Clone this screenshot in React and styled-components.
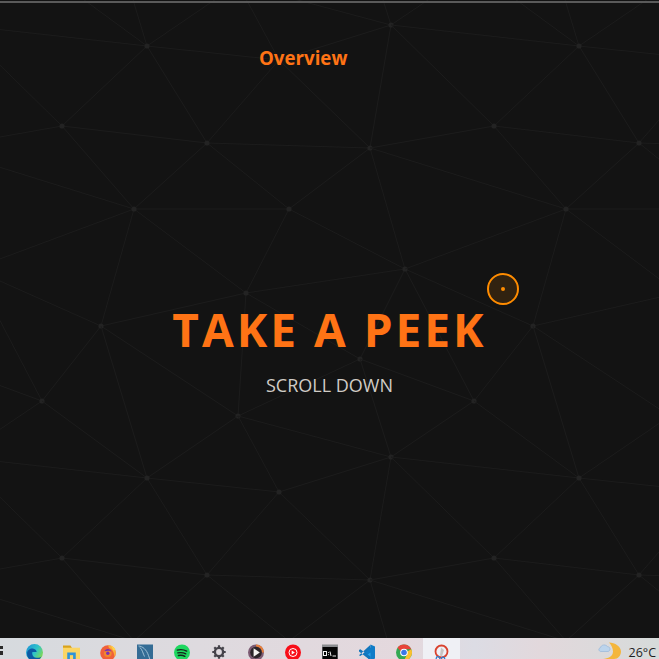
import React from "react";
import styled, { createGlobalStyle } from "styled-components";

const TILE = 432;

const NODES = {
  a: [147, 46],
  b: [62, 126],
  c: [207, 143],
  d: [134, 209],
  e: [289, 209],
  f: [391, 25],
  g: [370, 148],
  h: [405, 269],
  i: [246, 293],
  j: [101, 326],
  k: [42, 401],
  l: [238, 416],
  m: [360, 359],
  n: [279, 60],
};

// from, to, and which neighbouring tile the "to" node sits in
const EDGES = [
  ["a", "j", 0, -1], ["a", "k", 0, -1], ["a", "l", 0, -1], ["a", "f", -1, 0],
  ["a", "n", 0, 0], ["a", "b", 0, 0], ["a", "c", 0, 0],
  ["b", "f", -1, 0], ["b", "g", -1, 0], ["b", "c", 0, 0], ["b", "d", 0, 0],
  ["c", "n", 0, 0], ["c", "e", 0, 0], ["c", "d", 0, 0], ["c", "g", 0, 0],
  ["d", "g", -1, 0], ["d", "e", 0, 0], ["d", "j", 0, 0], ["d", "i", 0, 0], ["d", "h", -1, 0],
  ["e", "i", 0, 0], ["e", "g", 0, 0], ["e", "h", 0, 0],
  ["f", "n", 0, 0], ["f", "l", 0, -1], ["f", "m", 0, -1], ["f", "k", 1, -1], ["f", "g", 0, 0],
  ["g", "n", 0, 0], ["g", "h", 0, 0],
  ["h", "i", 0, 0], ["h", "m", 0, 0], ["h", "k", 1, 0], ["h", "j", 1, 0],
  ["i", "j", 0, 0], ["i", "l", 0, 0], ["i", "m", 0, 0],
  ["j", "k", 0, 0], ["j", "l", 0, 0],
  ["k", "m", -1, 0],
  ["l", "m", 0, 0],
  ["n", "l", 0, -1],
];

const OFFSETS = [-1, 0, 1, 2];

function Mesh() {
  const tiles = [];
  OFFSETS.forEach((tx) => OFFSETS.forEach((ty) => tiles.push([tx * TILE, ty * TILE])));
  return (
    <MeshLayer viewBox="0 0 659 659" width="659" height="659">
      {tiles.map(([ox, oy]) => (
        <g key={`${ox}-${oy}`}>
          {EDGES.map(([from, to, tx, ty]) => (
            <line
              key={from + to}
              x1={NODES[from][0] + ox}
              y1={NODES[from][1] + oy}
              x2={NODES[to][0] + tx * TILE + ox}
              y2={NODES[to][1] + ty * TILE + oy}
              stroke="#1c1c1c"
              strokeWidth="1"
            />
          ))}
          {Object.keys(NODES).map((key) => (
            <circle key={key} cx={NODES[key][0] + ox} cy={NODES[key][1] + oy} r="2.6" fill="#232323" />
          ))}
        </g>
      ))}
    </MeshLayer>
  );
}

const EdgeIcon = () => (
  <svg width="17" height="17" viewBox="0 0 16 16">
    <defs>
      <linearGradient id="edgeTop" x1="0" y1="0" x2="1" y2="0.6">
        <stop offset="0" stopColor="#1b8fd8" />
        <stop offset="0.6" stopColor="#2fc4c8" />
        <stop offset="1" stopColor="#7ed957" />
      </linearGradient>
    </defs>
    <circle cx="8" cy="8" r="8" fill="url(#edgeTop)" />
    <path d="M1 9c0-3 3-5 6-4.600 2 .3 3 1.600 3 3.200H6c-.8 2.600 1 5 4 5.400 2 .2 3.600-.3 4.600-1.400C13.200 14.600 10.600 16 8 16 4 16 .8 13 1 9z" fill="#0c59a4" />
  </svg>
);

const FolderIcon = () => (
  <svg width="17" height="17" viewBox="0 0 16 16">
    <path d="M0 1.500h7l1 1.500v2H0z" fill="#d9a21b" />
    <rect x="0" y="3.500" width="16" height="12.500" fill="#fbd564" />
    <rect x="4" y="8" width="8" height="8" fill="#2f93d8" />
    <rect x="6.500" y="10.500" width="3" height="5.500" fill="#fbd564" />
  </svg>
);

const FirefoxIcon = () => (
  <svg width="16" height="17" viewBox="0 0 16 16">
    <circle cx="8" cy="8.500" r="7.800" fill="#f0603a" />
    <path d="M8 .7c4.500 0 7.800 3.500 7.800 7.800 0 1.500-.5 3-1.300 4.200C14.500 8 12 4.500 9 3.500z" fill="#fbb03b" />
    <path d="M11 1.200c2 .5 3.500 2 4.500 4l-2 .8z" fill="#ffd34e" />
    <circle cx="7.800" cy="8.800" r="3.800" fill="#f08a2c" />
    <path d="M4.500 6.500a3.800 3.800 0 0 1 7 1c-1-1.200-2.400-1.500-3.700-1.200-1.400.3-2.400 1-3.300.2z" fill="#7a2fb8" />
    <circle cx="7.800" cy="8.800" r="1.700" fill="#7a2fb8" />
  </svg>
);

const MysqlIcon = () => (
  <svg width="16" height="17" viewBox="0 0 16 16">
    <rect width="16" height="16" fill="#346c95" />
    <path d="M1.500 1.500c4 .2 8 3.500 10 9.500l1.800 5M3 3c2.500 2.500 3 6 4.500 9" stroke="#a9c7da" strokeWidth="0.9" fill="none" />
  </svg>
);

const SpotifyIcon = () => (
  <svg width="16" height="17" viewBox="0 0 16 16">
    <circle cx="8" cy="8" r="8" fill="#1ed760" />
    <path d="M3.200 5.600c3-.8 6.500-.6 9.500 1M3.800 8.400c2.600-.6 5.600-.4 8 1M4.400 11c2.200-.5 4.500-.3 6.500.9" stroke="#15241b" strokeWidth="1.300" strokeLinecap="round" fill="none" />
  </svg>
);

const GearIcon = () => (
  <svg width="14" height="17" viewBox="0 0 14 16">
    <circle cx="7" cy="7.500" r="4.100" fill="none" stroke="#45434a" strokeWidth="2.400" />
    <g stroke="#45434a" strokeWidth="2.200">
      <path d="M7 .8v2.200M7 12v2.200M.3 7.500h2.200M11.500 7.500h2.200M2.300 2.800l1.500 1.500M10.200 10.700l1.500 1.500M2.300 12.200l1.500-1.500M10.200 4.300l1.500-1.500" />
    </g>
  </svg>
);

const PlayerIcon = () => (
  <svg width="16" height="17" viewBox="0 0 16 16">
    <circle cx="8" cy="8" r="8" fill="#7b5a72" />
    <path d="M8 0a8 8 0 0 1 8 8h-2a6 6 0 0 0-6-6z" fill="#e9803a" />
    <circle cx="8" cy="8" r="5.800" fill="#2b2428" />
    <path d="M5.600 3.800l6.200 4.200-6.200 4.200z" fill="#f4f2f0" />
  </svg>
);

const YtMusicIcon = () => (
  <svg width="16" height="17" viewBox="0 0 16 16">
    <circle cx="8" cy="8" r="8" fill="#f80d18" />
    <circle cx="8" cy="8" r="4" fill="none" stroke="#fff" strokeWidth="1" />
    <path d="M6.700 6l3.200 2-3.200 2z" fill="#fff" />
  </svg>
);

const CmdIcon = () => (
  <svg width="16" height="17" viewBox="0 0 16 16">
    <rect width="16" height="16" fill="#8b8d90" />
    <rect x="0.500" y="2.500" width="15" height="13.500" fill="#050505" />
    <rect x="1.500" y="7" width="3" height="4" fill="none" stroke="#f2f2f2" strokeWidth="1" />
    <path d="M6.500 7.500v.8M6.500 9.800v.8M8 7l1 4.500M10.500 11.500h3.500" stroke="#f2f2f2" strokeWidth="1" fill="none" />
  </svg>
);

const VsCodeIcon = () => (
  <svg width="16" height="17" viewBox="0 0 16 16">
    <path d="M11.500 0L16 2v12l-4.500 2L4 9l7.500-6z" fill="#0f7cc8" />
    <path d="M11.500 0v16L6.500 11.500 11.500 8z" fill="#2aa3ea" />
    <path d="M0 5.500l1.300-.8L11.500 12v3.800L0 7zM0 10.800l1.300.8L11.500 4V.2z" fill="#1276bc" />
  </svg>
);

const ChromeIcon = () => (
  <svg width="16" height="17" viewBox="0 0 16 16">
    <circle cx="8" cy="8" r="8" fill="#34a853" />
    <path d="M8 0a8 8 0 0 1 7.300 4.700H8A3.400 3.400 0 0 0 4.900 7L1.500 3.200A8 8 0 0 1 8 0z" fill="#e8443a" />
    <path d="M15.300 4.700A8 8 0 0 1 8 16l3-6 .2-3z" fill="#fbc02d" />
    <circle cx="8" cy="8" r="3.800" fill="#fff" />
    <circle cx="8" cy="8" r="2.800" fill="#3b78e7" />
  </svg>
);

const SnipIcon = () => (
  <svg width="16" height="17" viewBox="0 0 16 16">
    <circle cx="8.500" cy="7" r="6" fill="none" stroke="#d9432f" strokeWidth="1.800" />
    <path d="M8 3l3 2.500-2 6.500-2-1z" fill="#c8c4c2" />
    <circle cx="5" cy="14" r="1.800" fill="none" stroke="#2f7fd1" strokeWidth="1.300" />
    <circle cx="10" cy="14.500" r="1.800" fill="none" stroke="#2f7fd1" strokeWidth="1.300" />
  </svg>
);

const WeatherIcon = () => (
  <svg width="24" height="18" viewBox="0 0 24 18">
    <path d="M11 1.500c6 0 12 4 12 9 0 4-3 7.500-7 7.500H5c5-.6 10-2.500 10-7.500 0-3.500-2-6.800-4-9z" fill="#f4b63c" />
    <path d="M3 10.500c-2.500 0-3-3.300-.5-3.800C3 3.500 8 3 9.500 5.700c3-.2 3.500 4.300.5 4.800z" fill="#bcd4ec" stroke="#8fb2d8" strokeWidth="0.600" />
  </svg>
);

const APPS = [
  { id: "edge", Icon: EdgeIcon },
  { id: "explorer", Icon: FolderIcon },
  { id: "firefox", Icon: FirefoxIcon },
  { id: "mysql", Icon: MysqlIcon },
  { id: "spotify", Icon: SpotifyIcon },
  { id: "settings", Icon: GearIcon },
  { id: "player", Icon: PlayerIcon },
  { id: "ytmusic", Icon: YtMusicIcon },
  { id: "cmd", Icon: CmdIcon },
  { id: "vscode", Icon: VsCodeIcon },
  { id: "chrome", Icon: ChromeIcon },
  { id: "snip", Icon: SnipIcon, active: true },
];

function App() {
  return (
    <Page>
      <GlobalStyle />
      <Mesh />
      <TopStrip />
      <Main>
        <SectionTitle>Overview</SectionTitle>
        <Hero>
          <Headline>TAKE A PEEK</Headline>
          <ScrollHint>SCROLL DOWN</ScrollHint>
        </Hero>
        <Cursor>
          <CursorDot />
        </Cursor>
      </Main>
      <Taskbar>
        <StartStub />
        <AppList>
          {APPS.map(({ id, Icon, active }) => (
            <AppSlot key={id} active={active}>
              <Icon />
            </AppSlot>
          ))}
        </AppList>
        <Weather>
          <WeatherIcon />
          <Temperature>26°C</Temperature>
        </Weather>
      </Taskbar>
    </Page>
  );
}

export default App;

const GlobalStyle = createGlobalStyle`
  html, body {
    margin: 0;
    padding: 0;
    background: #131313;
    overflow: hidden;
  }
`;

const Page = styled.div`
  position: relative;
  width: 659px;
  height: 659px;
  display: flex;
  flex-direction: column;
  overflow: hidden;
  background: #131313;
  font-family: "Open Sans", "Noto Sans", sans-serif;
`;

const MeshLayer = styled.svg`
  position: absolute;
  top: 0;
  left: 0;
`;

const TopStrip = styled.div`
  position: relative;
  height: 2px;
  margin-top: 1px;
  background: #5a5a5a;
`;

const Main = styled.main`
  position: relative;
  flex: 1;
  display: flex;
  flex-direction: column;
`;

const SectionTitle = styled.h2`
  margin: 42px 0 0 259px;
  font-size: 18.7px;
  line-height: 26px;
  font-weight: 700;
  color: #ff7315;
`;

const Hero = styled.div`
  display: flex;
  flex-direction: column;
  align-items: center;
  margin-top: 227px;
`;

const Headline = styled.h1`
  margin: 0;
  font-size: 46px;
  line-height: 62px;
  font-weight: 700;
  letter-spacing: 3px;
  color: #ff7315;
`;

const ScrollHint = styled.p`
  margin: 13px 0 0;
  font-size: 18px;
  line-height: 24px;
  font-weight: 400;
  color: #d0ccc6;
`;

const Cursor = styled.div`
  position: absolute;
  left: 487px;
  top: 270px;
  width: 32px;
  height: 32px;
  box-sizing: border-box;
  display: flex;
  align-items: center;
  justify-content: center;
  border: 2px solid #ff8c00;
  border-radius: 50%;
  background: rgba(255, 140, 0, 0.13);
`;

const CursorDot = styled.span`
  width: 4px;
  height: 4px;
  border-radius: 50%;
  background: #ff8c00;
`;

const Taskbar = styled.footer`
  position: relative;
  height: 21px;
  display: flex;
  overflow: hidden;
  background: linear-gradient(90deg, #d6dade 0%, #dedadf 30%, #e4d8dd 62%, #dcdce4 72%, #e2d8dc 82%, #d6dbda 100%);
`;

const StartStub = styled.div`
  width: 3px;
  height: 9px;
  margin: 8px 12.5px 0 0;
  flex: none;
  background: linear-gradient(#2a2a2a 0 3px, transparent 3px 5px, #2a2a2a 5px);
`;

const AppList = styled.div`
  display: flex;
`;

const AppSlot = styled.div.withConfig({ shouldForwardProp: (prop) => prop !== "active" })`
  width: 37px;
  height: 21px;
  padding-top: 6px;
  box-sizing: border-box;
  flex: none;
  display: flex;
  justify-content: center;
  background: ${(props) => (props.active ? "#eff0f5" : "transparent")};
`;

const Weather = styled.div`
  display: flex;
  align-items: flex-start;
  margin-left: 138px;
  padding-top: 3px;
  flex: none;
`;

const Temperature = styled.span`
  margin: 5px 0 0 7px;
  font-size: 12.5px;
  line-height: 13px;
  color: #1e1e1e;
  white-space: nowrap;
`;
